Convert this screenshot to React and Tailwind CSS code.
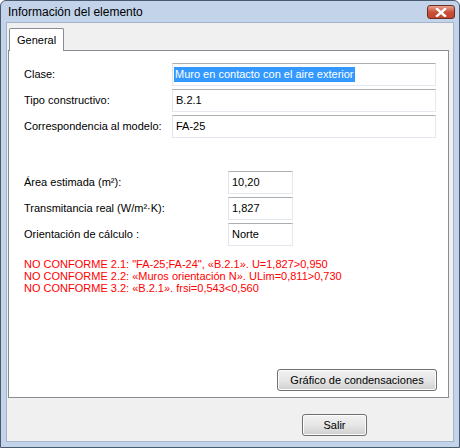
import React from "react";

const font = { fontFamily: '"Liberation Sans", Arial, sans-serif' };

const Field = ({ label, value, width, selected }) => (
  <div className="flex items-center h-[23px]">
    <span className="w-[148px] shrink-0">{label}</span>
    <div
      className={`h-[23px] ${width} border border-[#abadb3] border-r-[#e3e9ef] border-b-[#e3e9ef] border-l-[#e2e3ea] bg-white flex items-center pl-[1px]`}
    >
      {selected ? (
        <span className="bg-[#3399ff] text-white px-[1px] leading-[15px]">{value}</span>
      ) : (
        <span className="pl-[2px]">{value}</span>
      )}
    </div>
  </div>
);

const Field2 = ({ label, value }) => (
  <div className="flex items-center h-[23px]">
    <span className="w-[204px] shrink-0">{label}</span>
    <div className="h-[23px] w-[65px] border border-[#abadb3] border-r-[#e3e9ef] border-b-[#e3e9ef] border-l-[#e2e3ea] bg-white flex items-center pl-[3px]">
      {value}
    </div>
  </div>
);

const VistaButton = ({ children, className }) => (
  <button
    className={`h-[22px] rounded-[3px] border border-[#707070] bg-gradient-to-b from-[#f2f2f2] via-[#e6e6e6] to-[#cfcfcf] shadow-[inset_0_0_0_1px_#fcfcfc] text-[11px] text-black ${className}`}
  >
    {children}
  </button>
);

export default function App() {
  return (
    <div
      className="w-[460px] h-[448px] bg-[#c2d3ea] border border-[#4a5a6e] rounded-t-[6px] flex flex-col pl-[5px] pr-[5px] pb-[5px] text-[11px] text-black"
      style={font}
    >
      {/* Title bar */}
      <div className="h-[21px] flex items-center justify-between shrink-0">
        <span className="pl-[2px] text-[12px] leading-none">Información del elemento</span>
        <div className="w-[28px] h-[14px] mr-[-1px] mt-[1px] rounded-[3px] border border-[#6b2f26] bg-gradient-to-b from-[#e8a493] via-[#c9503a] to-[#c4452e] flex items-center justify-center">
          <svg width="12" height="9" viewBox="0 0 12 9">
            <path d="M2 1 L10 8 M10 1 L2 8" stroke="#ffffff" strokeWidth="2.4" strokeLinecap="square" />
          </svg>
        </div>
      </div>

      {/* Client area */}
      <div className="flex-1 bg-[#f0f0f0] border border-[#a4b5cc] flex flex-col pl-[1px] pr-[4px] pt-[5px]">
        <div className="flex pl-[1px]">
          <div className="h-[23px] px-[7px] pt-[3px] bg-white border border-[#898c95] border-b-0 relative z-10 -mb-[1px] rounded-t-[2px]">
            General
          </div>
        </div>
        <div className="h-[348px] bg-white border border-[#898c95] flex flex-col pl-[15px] pr-[11px] pt-[12px] pb-[6px]">
          <div className="flex flex-col gap-[3px]">
            <Field label="Clase:" value="Muro en contacto con el aire exterior" width="w-[264px]" selected />
            <Field label="Tipo constructivo:" value="B.2.1" width="w-[264px]" />
            <Field label="Correspondencia al modelo:" value="FA-25" width="w-[264px]" />
          </div>
          <div className="flex flex-col gap-[3px] mt-[33px]">
            <Field2 label="Área estimada (m²):" value="10,20" />
            <Field2 label="Transmitancia real (W/m²·K):" value="1,827" />
            <Field2 label="Orientación de cálculo :" value="Norte" />
          </div>
          <div className="mt-[12px] text-[#ff0000] leading-[12px]">
            <div>NO CONFORME 2.1: "FA-25;FA-24", «B.2.1». U=1,827&gt;0,950</div>
            <div>NO CONFORME 2.2: «Muros orientación N». ULim=0,811&gt;0,730</div>
            <div>NO CONFORME 3.2: «B.2.1». frsi=0,543&lt;0,560</div>
          </div>
          <div className="flex-1" />
          <div className="flex justify-end">
            <VistaButton className="w-[160px]">Gráfico de condensaciones</VistaButton>
          </div>
        </div>
        <div className="flex justify-end pr-[82px] pt-[16px]">
          <VistaButton className="w-[65px]">Salir</VistaButton>
        </div>
      </div>
    </div>
  );
}
